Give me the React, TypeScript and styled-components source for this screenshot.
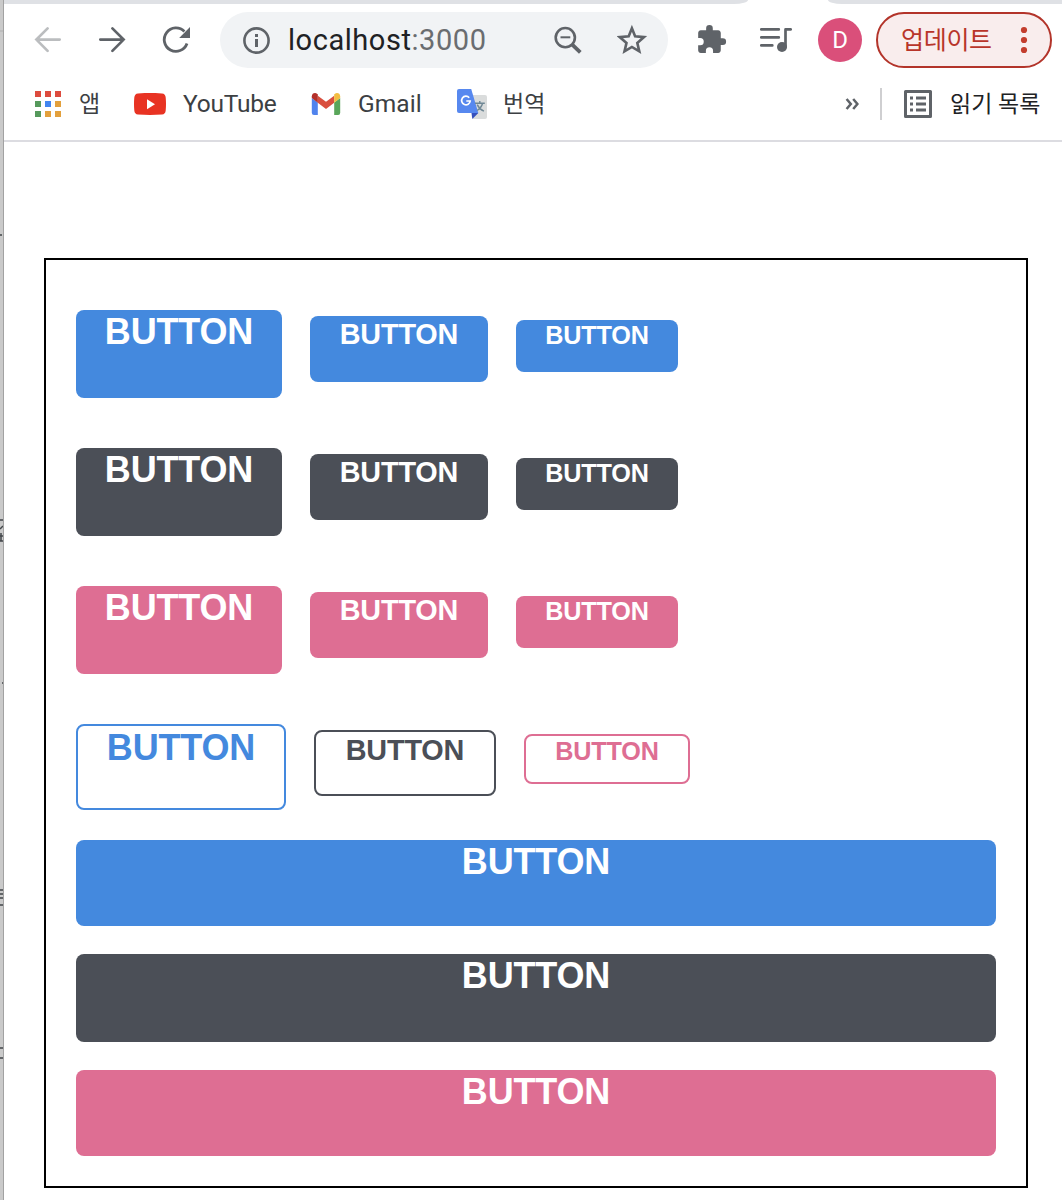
import React from 'react';
import styled, { createGlobalStyle, css } from 'styled-components';

const uiFont = `Roboto, "Noto Sans CJK KR", sans-serif`;

const palette = {
  blue: '#4489de',
  gray: '#4b4f57',
  pink: '#de6e93',
};
type Color = keyof typeof palette;
type Size = 'large' | 'medium' | 'small';

const GlobalStyle = createGlobalStyle`
  *, *::before, *::after { box-sizing: border-box; }
  html, body { margin: 0; background: #fff; overflow: hidden; }
`;

const Screen = styled.div`
  display: flex;
  width: 1062px;
  height: 1200px;
  overflow: hidden;
  background: #fff;
`;

const Backdrop = styled.div`
  flex: 0 0 4px;
  background: #cacaca;
  border-right: 1px solid #a2a2a2;
`;

const BackdropMarks = styled.svg`
  display: block;
`;

const Window = styled.div`
  flex: 1;
  min-width: 0;
  display: flex;
  flex-direction: column;
`;

const TabStrip = styled.div`
  display: flex;
  justify-content: space-between;
  height: 4px;
`;

const InactiveTab = styled.div<{ $width: number; $side: 'left' | 'right' }>`
  width: ${(p) => p.$width}px;
  height: 4px;
  background: #dfe1e5;
  border-radius: ${(p) => (p.$side === 'left' ? '0 0 14px 0 / 0 0 4px 0' : '0 0 0 14px / 0 0 0 4px')};
`;

const Toolbar = styled.div`
  display: flex;
  align-items: center;
  height: 56px;
  margin-top: 8px;
  padding-left: 28px;
`;

const Icon = styled.svg<{ $left?: number; $pushed?: boolean }>`
  display: block;
  flex: none;
  margin-left: ${(p) => (p.$pushed ? 'auto' : `${p.$left ?? 0}px`)};
`;

const Omnibox = styled.div`
  display: flex;
  align-items: center;
  width: 448px;
  height: 56px;
  margin-left: 28px;
  padding-left: 22px;
  border-radius: 28px;
  background: #f1f3f5;
`;

const Address = styled.div`
  width: 282px;
  padding-left: 18px;
  font: 400 29px/56px ${uiFont};
  letter-spacing: 0.55px;
  color: #202124;
  white-space: nowrap;
`;

const Port = styled.span`
  color: #6a6d70;
`;

const Avatar = styled.div`
  display: flex;
  align-items: center;
  justify-content: center;
  width: 44px;
  height: 44px;
  margin-left: 26px;
  border-radius: 50%;
  background: #da4f7a;
  color: #fff;
  font: 400 24px/44px ${uiFont};
`;

const UpdateButton = styled.div`
  display: flex;
  align-items: center;
  width: 176px;
  height: 56px;
  margin-left: 14px;
  padding-left: 23px;
  border: 2px solid #b3342a;
  border-radius: 28px;
  background: #f9eded;
  color: #b8352a;
  font: 400 25px/52px ${uiFont};
  white-space: nowrap;
`;

const UpdateLabel = styled.span`
  width: 116px;
  padding-top: 2px;
  letter-spacing: -0.3px;
`;

const Bookmarks = styled.div`
  display: flex;
  align-items: center;
  height: 74px;
  padding-left: 31px;
  border-bottom: 2px solid #dcdce1;
`;

const BookmarkLabel = styled.span<{
  $width: number;
  $indent: number;
  $spacing?: number;
  $korean?: boolean;
  $dark?: boolean;
}>`
  flex: none;
  width: ${(p) => p.$width}px;
  padding-left: ${(p) => p.$indent}px;
  padding-top: ${(p) => (p.$korean ? 1 : 0)}px;
  font: 400 ${(p) => (p.$korean ? 23 : 24.5)}px/30px ${uiFont};
  letter-spacing: ${(p) => p.$spacing ?? 0}px;
  color: ${(p) => (p.$dark ? '#202124' : '#3c4043')};
  white-space: nowrap;
`;

const Separator = styled.div`
  width: 2px;
  height: 32px;
  margin-left: 21px;
  background: #cfcfd1;
`;

const Page = styled.main`
  padding: 116px 34px 0 40px;
`;

const Panel = styled.section`
  height: 930px;
  padding: 50px 30px 0;
  border: 2px solid #000;
`;

const ButtonRow = styled.div<{ $gapBelow?: number }>`
  display: flex;
  align-items: baseline;
  gap: 28px;
  height: 88px;
  margin-bottom: ${(p) => p.$gapBelow ?? 50}px;
`;

const FullWidthStack = styled.div`
  display: flex;
  flex-direction: column;
  gap: 28px;
`;

const sizes = {
  large: css`
    width: 206px;
    height: 88px;
    font-size: 36px;
    line-height: 43px;
  `,
  medium: css`
    width: 178px;
    height: 66px;
    font-size: 28.8px;
    line-height: 36px;
  `,
  small: css`
    width: 162px;
    height: 52px;
    font-size: 25.2px;
    line-height: 31px;
  `,
};

const outlineSizes = {
  large: css`
    width: 210px;
    height: 86px;
  `,
  medium: css`
    width: 182px;
    height: 66px;
  `,
  small: css`
    width: 166px;
    height: 50px;
  `,
};

const Button = styled.div.attrs({ role: 'button', tabIndex: 0 })<{
  $color: Color;
  $size: Size;
  $outline?: boolean;
  $full?: number;
}>`
  flex: none;
  border-radius: 8px;
  background: ${(p) => palette[p.$color]};
  color: #fff;
  font-family: 'Liberation Sans', Arial, sans-serif;
  font-weight: 700;
  letter-spacing: -0.15px;
  text-align: center;
  cursor: pointer;
  ${(p) => sizes[p.$size]}
  ${(p) =>
    p.$outline &&
    css`
      border: 2px solid ${palette[p.$color]};
      background: #fff;
      color: ${palette[p.$color]};
      ${outlineSizes[p.$size]}
    `}
  ${(p) =>
    p.$full &&
    css`
      width: 100%;
      height: ${p.$full}px;
    `}
`;

const rows: Color[] = ['blue', 'gray', 'pink'];
const buttonSizes: Size[] = ['large', 'medium', 'small'];
const appColors = ['#dd4b3e', '#dd4b3e', '#dd4b3e', '#56995c', '#4286f0', '#e3a03c', '#56995c', '#e3a03c', '#e3a03c'];

const BrowserToolbar = () => (
  <Toolbar>
    <Icon width="32" height="32" viewBox="0 0 32 32" fill="none" stroke="#bbbdbf" strokeWidth="2.7" strokeLinecap="round">
      <path d="M27.7 15.6H4.5M15.6 4.4L4.4 15.6l11.2 11.3" />
    </Icon>
    <Icon $left={32} width="32" height="32" viewBox="0 0 32 32" fill="none" stroke="#5f6368" strokeWidth="2.7" strokeLinecap="round">
      <path d="M4.300 15.6h23.300M16.400 4.400l11.200 11.200-11.200 11.300" />
    </Icon>
    <Icon $left={32} width="32" height="32" viewBox="0 0 32 32">
      <path d="M27 19.5A11.7 11.7 0 1 1 24.4 7.5" fill="none" stroke="#5f6368" strokeWidth="2.8" />
      <path d="M30 3v11H19.2Z" fill="#5f6368" />
    </Icon>
    <Omnibox>
      <Icon width="28" height="28" viewBox="0 0 28 28">
        <circle cx="14.5" cy="14.5" r="12.1" fill="none" stroke="#5f6368" strokeWidth="2.6" />
        <path d="M13 8h3v3h-3zM13 13h3v8h-3z" fill="#5f6368" />
      </Icon>
      <Address>
        localhost<Port>:3000</Port>
      </Address>
      <Icon width="32" height="32" viewBox="0 0 32 32" fill="none" stroke="#5f6368" strokeWidth="2.6">
        <circle cx="13.3" cy="13.6" r="9.6" />
        <path d="M8.5 13.3h9.8" strokeWidth="2" />
        <path d="M20 20.4l8.3 8" strokeWidth="3.8" />
      </Icon>
      <Icon $left={33} width="32" height="32" viewBox="0 0 32 32">
        <path
          d="M14.9 4.3l3.2 8 8.9.8-6.7 5.8 2 8.5-7.4-4.5-7.4 4.5 2-8.5-6.8-5.8 9-.8z"
          fill="none"
          stroke="#5f6368"
          strokeWidth="2.6"
        />
      </Icon>
    </Omnibox>
    <Icon $left={28} width="32" height="32" viewBox="0 0 32 32" fill="#5f6368">
      <path
        transform="translate(-.5 -.3) scale(1.33)"
        d="M20.5 11H19V7c0-1.1-.9-2-2-2h-4V3.5a2.500 2.500 0 0 0-5 0V5H4c-1.100 0-1.990.9-1.990 2v3.800H3.500a2.700 2.700 0 0 1 0 5.400H2V20c0 1.100.9 2 2 2h3.800v-1.500a2.700 2.700 0 0 1 5.400 0V22H17c1.100 0 2-.9 2-2v-4h1.500a2.500 2.500 0 0 0 0-5z"
      />
    </Icon>
    <Icon $left={30} width="34" height="32" viewBox="0 0 34 32" fill="none" stroke="#5f6368" strokeWidth="2.7">
      <path d="M3.300 5.400h17.500M3.300 13.400h17.500M3.300 21.400h11" strokeLinecap="round" />
      <path d="M27.500 23V5.400h5.200" strokeLinejoin="round" strokeLinecap="round" />
      <circle cx="24" cy="23" r="5" fill="#5f6368" stroke="none" />
    </Icon>
    <Avatar>D</Avatar>
    <UpdateButton>
      <UpdateLabel>업데이트</UpdateLabel>
      <Icon width="14" height="32" viewBox="0 0 14 32" fill="#c33d2d">
        <circle cx="7" cy="6" r="3.1" />
        <circle cx="7" cy="16" r="3.1" />
        <circle cx="7" cy="26" r="3.1" />
      </Icon>
    </UpdateButton>
  </Toolbar>
);

const BookmarksBar = () => (
  <Bookmarks>
    <Icon width="26" height="26" viewBox="0 0 26 26">
      {appColors.map((fill, i) => (
        <rect key={i} x={(i % 3) * 10} y={Math.floor(i / 3) * 10} width="6" height="6" fill={fill} />
      ))}
    </Icon>
    <BookmarkLabel $width={54} $indent={18} $korean>앱</BookmarkLabel>
    <Icon $left={19} width="32" height="22" viewBox="0 0 32 22">
      <path d="M4 .4Q16-.6 28 .4 31.500.7 31.700 4.500q.6 6.500 0 13-.3 3.700-3.700 4.100-12 .8-24 0Q.6 21.200.3 17.500q-.6-6.500 0-13Q.6.7 4 .4z" fill="#e83323" />
      <path d="M13 6.300v10l8-5z" fill="#fff" />
    </Icon>
    <BookmarkLabel $width={110} $indent={17} $spacing={-0.25}>YouTube</BookmarkLabel>
    <Icon $left={35} width="30" height="22" viewBox="0 0 30 22">
      <path d="M.8 5l6 4.500V22H3Q.8 22 .8 19.800z" fill="#5083ed" />
      <path d="M29.200 5l-6 4.500V22h3.900q2.100 0 2.100-2.200z" fill="#59a65a" />
      <path d="M6.800 2.700L15 8.800l8.200-6.100v7L15 15.900 6.800 9.700z" fill="#d94f3f" />
      <path d="M.8 5V3.300C.8.4 4-.9 6.300.9l.5.4v8.400z" fill="#b4302a" />
      <path d="M29.200 5V3.300C29.200.4 26-.9 23.700.9l-.5.4v8.400z" fill="#f2bd42" />
    </Icon>
    <BookmarkLabel $width={116} $indent={17} $spacing={0.1}>Gmail</BookmarkLabel>
    <Icon width="30" height="30" viewBox="0 0 30 30">
      <path d="M12 6h16q2 0 2 2v20q0 2-2 2H16z" fill="#dadcdc" />
      <path d="M14.500 24h6.800l-6 6z" fill="#3550bd" />
      <path d="M2 0h12.200L21.300 24H2q-2 0-2-2V2Q0 0 2 0z" fill="#5788ef" />
      <path d="M12.200 8.700A4.300 4.300 0 1 0 13.200 12H9.300" fill="none" stroke="#fff" strokeWidth="1.7" />
      <path d="M18 14.300h9.800M22.800 12v2.300M25.600 14.300c-1 3.500-3.300 6-5.500 7.200M20.200 15.600c1.200 2.500 4 5.400 6.700 6.600" fill="none" stroke="#6f8795" strokeWidth="1.4" />
    </Icon>
    <BookmarkLabel $width={62} $indent={16} $korean>번역</BookmarkLabel>
    <Icon $pushed width="14" height="14" viewBox="0 0 14 14" fill="none" stroke="#5f6368" strokeWidth="2.5">
      <path d="M1.600 2l4.200 5-4.200 5M8.200 2l4.200 5-4.200 5" />
    </Icon>
    <Separator />
    <Icon $left={22} width="28" height="28" viewBox="0 0 28 28">
      <path d="M1.500 1.500h25v25h-25z" fill="none" stroke="#5f6368" strokeWidth="3" strokeLinejoin="round" />
      <path d="M6 6.500h3v3H6zM12 6.500h10v3H12zM6 12.500h3v3H6zM12 12.500h10v3H12zM6 18.500h3v3H6zM12 18.500h10v3H12z" fill="#5f6368" />
    </Icon>
    <BookmarkLabel $width={130} $indent={18} $korean $dark>읽기 목록</BookmarkLabel>
  </Bookmarks>
);

export default function App() {
  return (
    <Screen>
      <GlobalStyle />
      <Backdrop>
        <BackdropMarks width="3" height="1200" viewBox="0 0 3 1200" fill="none" stroke="#42464a" strokeWidth="1.5">
          <path d="M0 31h3" stroke="#b9b9b9" />
          <path d="M0 235h2M0 520h3M3 526l-3 3M0 536h3M0 541h3M1 533v8M2 683h1M0 890h3M0 894h3M0 898h3M0 905h3M0 1048h3M0 1058h3" />
        </BackdropMarks>
      </Backdrop>
      <Window>
        <TabStrip>
          <InactiveTab $width={744} $side="left" />
          <InactiveTab $width={234} $side="right" />
        </TabStrip>
        <BrowserToolbar />
        <BookmarksBar />
        <Page>
          <Panel>
            {rows.map((color) => (
              <ButtonRow key={color}>
                {buttonSizes.map((size) => (
                  <Button key={size} $color={color} $size={size}>
                    BUTTON
                  </Button>
                ))}
              </ButtonRow>
            ))}
            <ButtonRow $gapBelow={28}>
              {rows.map((color, i) => (
                <Button key={color} $color={color} $size={buttonSizes[i]} $outline>
                  BUTTON
                </Button>
              ))}
            </ButtonRow>
            <FullWidthStack>
              <Button $color="blue" $size="large" $full={86}>BUTTON</Button>
              <Button $color="gray" $size="large" $full={88}>BUTTON</Button>
              <Button $color="pink" $size="large" $full={86}>BUTTON</Button>
            </FullWidthStack>
          </Panel>
        </Page>
      </Window>
    </Screen>
  );
}
